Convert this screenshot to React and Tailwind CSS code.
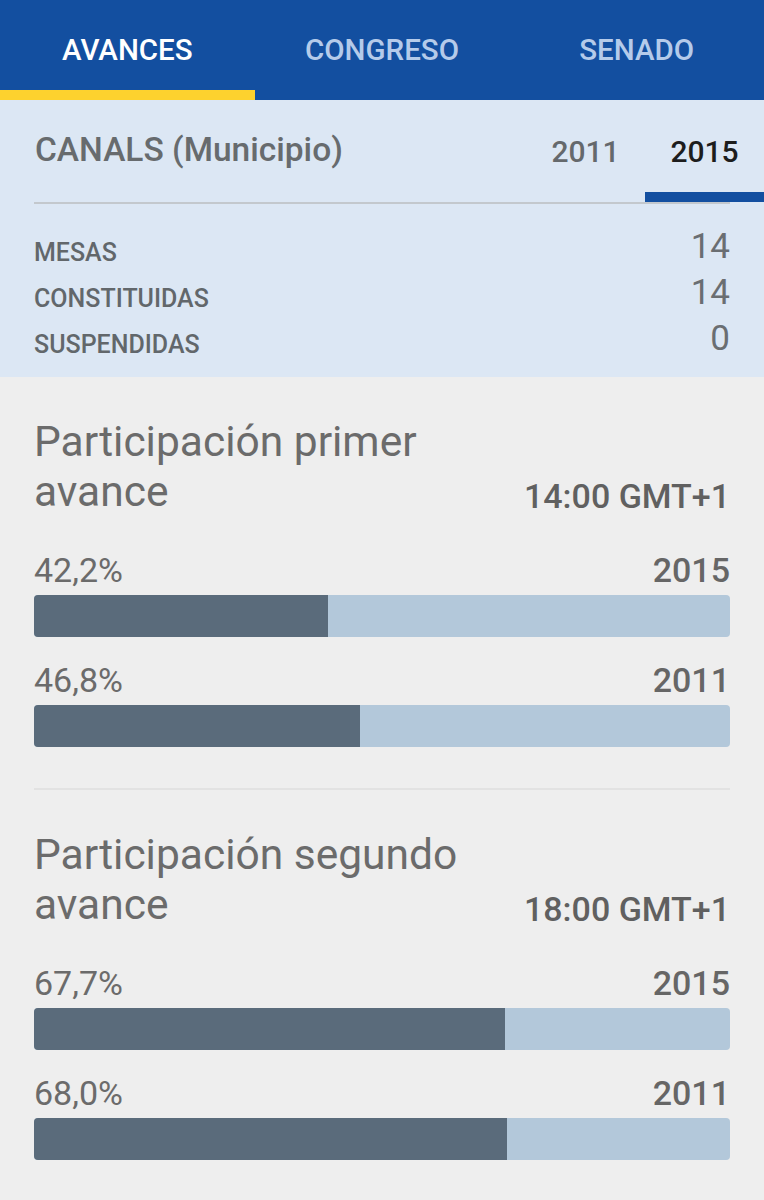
import React from "react";

const Bar = ({ pct, label, year }) => (
  <div className="flex flex-col">
    <div className="flex items-center justify-between h-[34px] text-[34px] leading-none text-[#6b6b6b]">
      <span>{label}</span>
      <span className="font-medium text-[#666666]">{year}</span>
    </div>
    <div className="mt-[8px] h-[42px] rounded-[4px] bg-[#b3c8da] overflow-hidden flex">
      <div className="h-full bg-[#5a6b7b]" style={{ width: `${pct}%` }} />
    </div>
  </div>
);

const Section = ({ title1, title2, time, bars }) => (
  <div className="flex flex-col">
    <div className="flex items-end justify-between">
      <div className="text-[42.5px] leading-[50px] text-[#6b6b6b]">
        <div>{title1}</div>
        <div>{title2}</div>
      </div>
      <div className="text-[34px] font-medium leading-none text-[#606060] mb-[4px]">{time}</div>
    </div>
    <div className="mt-[36px] flex flex-col gap-[26px]">
      {bars.map((b) => (
        <Bar key={b.year} {...b} />
      ))}
    </div>
  </div>
);

export default function App() {
  return (
    <div className="w-[764px] h-[1200px] bg-[#eeeeee] overflow-hidden" style={{ fontFamily: "Roboto, 'Liberation Sans', sans-serif" }}>
      {/* Top tabs */}
      <div className="h-[100px] bg-[#134fa0] flex">
        <div className="flex-1 relative flex items-center justify-center text-[29.5px] font-medium text-white">
          AVANCES
          <div className="absolute left-0 right-0 bottom-0 h-[10px] bg-[#fdd22e]" />
        </div>
        <div className="flex-1 flex items-center justify-center text-[29.5px] font-medium text-[#b5cbea]">CONGRESO</div>
        <div className="flex-1 flex items-center justify-center text-[29.5px] font-medium text-[#b5cbea]">SENADO</div>
      </div>

      {/* Municipio header */}
      <div className="h-[102px] bg-[#dce7f4] flex items-center pl-[35px]">
        <div className="flex-1 text-[33.5px] font-medium text-[#676b6e] pb-[2px]">CANALS (Municipio)</div>
        <div className="flex h-full">
          <div className="w-[119px] flex items-center justify-center text-[30px] font-medium text-[#65696c]">2011</div>
          <div className="w-[119px] relative flex items-center justify-center text-[30px] font-medium text-[#1d1d1d]">
            2015
            <div className="absolute left-0 right-0 bottom-0 h-[10px] bg-[#134fa0]" />
          </div>
        </div>
      </div>
      <div className="h-[2px] bg-[#dce7f4] px-[34px]">
        <div className="h-full bg-[#c3c8cd]" />
      </div>

      {/* Stats */}
      <div className="bg-[#dce7f4] h-[173px] px-[34px] pt-[15px] flex flex-col">
        {[
          ["MESAS", "14"],
          ["CONSTITUIDAS", "14"],
          ["SUSPENDIDAS", "0"],
        ].map(([l, v]) => (
          <div key={l} className="flex items-end justify-between h-[46px]">
            <span className="text-[25px] font-medium text-[#62676b] leading-none">{l}</span>
            <span className="text-[35px] text-[#6a6e72] leading-none mb-[1px]">{v}</span>
          </div>
        ))}
      </div>

      {/* Content */}
      <div className="px-[34px] pt-[40px]">
        <Section
          title1="Participación primer"
          title2="avance"
          time="14:00 GMT+1"
          bars={[
            { pct: 42.2, label: "42,2%", year: "2015" },
            { pct: 46.8, label: "46,8%", year: "2011" },
          ]}
        />
        <div className="h-[2px] bg-[#e2e2e2] mt-[41px] mb-[40px]" />
        <Section
          title1="Participación segundo"
          title2="avance"
          time="18:00 GMT+1"
          bars={[
            { pct: 67.7, label: "67,7%", year: "2015" },
            { pct: 68.0, label: "68,0%", year: "2011" },
          ]}
        />
      </div>
    </div>
  );
}
